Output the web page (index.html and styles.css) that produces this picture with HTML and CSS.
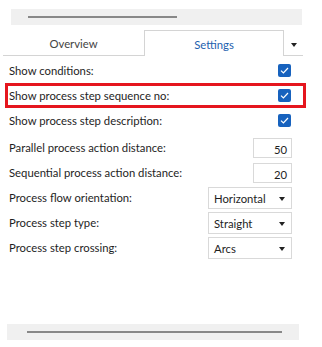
FILE: index.html
```html
<!DOCTYPE html>
<html lang="en">
<head>
  <meta charset="UTF-8">
  <meta name="viewport" content="width=device-width, initial-scale=1.0">
  <title>Settings</title>
  <link rel="stylesheet" href="styles.css">
</head>
<body>
  <div class="scrollbar scrollbar-top"><div class="thumb"></div></div>

  <div class="tabs">
    <div class="tab">Overview</div>
    <div class="tab active">Settings</div>
    <div class="tab-menu"><span class="arrow"></span></div>
  </div>

  <div class="settings">
    <div class="row">
      <span>Show conditions:</span>
      <span class="check"><svg width="9" height="7" viewBox="0 0 9 7"><path d="M1 3.6 L3.4 6 L8 1" fill="none" stroke="#fff" stroke-width="1.2"/></svg></span>
    </div>
    <div class="row highlight">
      <span>Show process step sequence no:</span>
      <span class="check"><svg width="9" height="7" viewBox="0 0 9 7"><path d="M1 3.6 L3.4 6 L8 1" fill="none" stroke="#fff" stroke-width="1.2"/></svg></span>
    </div>
    <div class="row">
      <span>Show process step description:</span>
      <span class="check"><svg width="9" height="7" viewBox="0 0 9 7"><path d="M1 3.6 L3.4 6 L8 1" fill="none" stroke="#fff" stroke-width="1.2"/></svg></span>
    </div>

    <div class="group">
      <div class="row">
        <span>Parallel process action distance:</span>
        <span class="number">50</span>
      </div>
      <div class="row">
        <span>Sequential process action distance:</span>
        <span class="number">20</span>
      </div>
      <div class="row">
        <span>Process flow orientation:</span>
        <span class="select">Horizontal<span class="arrow"></span></span>
      </div>
      <div class="row">
        <span>Process step type:</span>
        <span class="select">Straight<span class="arrow"></span></span>
      </div>
      <div class="row">
        <span>Process step crossing:</span>
        <span class="select">Arcs<span class="arrow"></span></span>
      </div>
    </div>
  </div>

  <div class="scrollbar scrollbar-bottom"><div class="thumb"></div></div>
</body>
</html>
```

FILE: styles.css
```css
body {
  margin: 0;
  width: 322px;
  height: 347px;
  display: flex;
  flex-direction: column;
  font-family: Lato, "Open Sans", sans-serif;
  font-size: 11.3px;
  color: #1e1e1e;
  background: #fff;
}
.scrollbar {
  height: 16px;
  background: #f0f0f0;
  display: flex;
  align-items: center;
}
.scrollbar .thumb {
  height: 2px;
  background: #888;
}
.scrollbar-top {
  margin: 9px 20px 0 11px;
}
.scrollbar-top .thumb {
  margin-left: 17px;
  width: 149px;
}
.scrollbar-bottom {
  margin: auto 23px 7px 7px;
}
.scrollbar-bottom .thumb {
  margin-left: 20px;
  width: 255px;
}
.tabs {
  display: flex;
  margin: 5px 19px 0 3px;
  height: 26px;
}
.tab {
  width: 141px;
  display: flex;
  align-items: center;
  justify-content: center;
  border-bottom: 1px solid #d4d4d4;
  color: #444;
  padding-top: 2px;
  box-sizing: border-box;
}
.tab.active {
  width: 140px;
  border: 1px solid #d4d4d4;
  border-bottom: none;
  color: #1d5fae;
}
.tab-menu {
  flex: 1;
  border-bottom: 1px solid #d4d4d4;
  display: flex;
  align-items: center;
  justify-content: center;
  padding-top: 4px;
}
.arrow {
  width: 0;
  height: 0;
  border-left: 3.5px solid transparent;
  border-right: 3.5px solid transparent;
  border-top: 4px solid #222;
}
.settings {
  margin: 2px 16px 0 5px;
}
.row {
  height: 25px;
  display: flex;
  align-items: center;
  justify-content: space-between;
  padding: 0 14px 0 4px;
  box-sizing: border-box;
}
.row.highlight {
  border: 3px solid #e5161e;
  padding: 0 11px 0 1px;
}
.group {
  margin-top: 2px;
}
.check {
  width: 13px;
  height: 13px;
  margin-right: 1px;
  border-radius: 2px;
  background: #1762be;
  display: flex;
  align-items: center;
  justify-content: center;
}
.number {
  width: 39px;
  height: 20px;
  border: 1px solid #d9d9d9;
  box-sizing: border-box;
  text-align: right;
  padding: 2px 4px 0 0;
  line-height: 17px;
}
.select {
  width: 84px;
  height: 22px;
  border: 1px solid #d9d9d9;
  box-sizing: border-box;
  display: flex;
  align-items: center;
  justify-content: space-between;
  padding: 2px 6px 0 5px;
}
```
